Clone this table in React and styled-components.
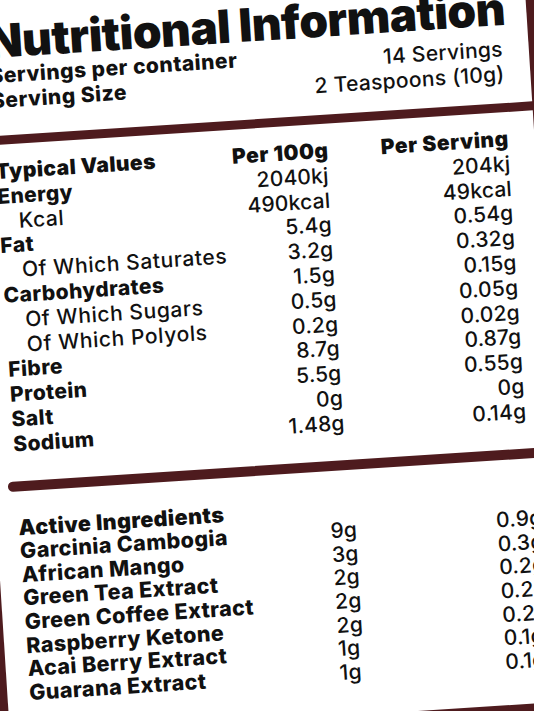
import React from 'react'
import styled, { createGlobalStyle } from 'styled-components'

const GlobalStyle = createGlobalStyle`
    html, body {
        margin: 0;
        padding: 0;
        background: #4e1b1e;
        overflow: hidden;
    }
    body {
        font-family: Inter, "Open Sans", "Liberation Sans", sans-serif;
        color: #111;
    }
`

const BROWN = '#4e1b1e'

const Stage = styled.div`
    width: 534px;
    height: 711px;
    overflow: hidden;
    display: flex;
    justify-content: center;
    align-items: flex-start;
    background: ${BROWN};
`

// the label is larger than the photo frame and tilted a little
const Label = styled.div`
    flex: none;
    width: 562px;
    margin-top: -30px;
    display: flex;
    flex-direction: column;
    gap: 9px;
    transform: rotate(-3.7deg);
    transform-origin: 281px 385px;
`

const Card = styled.section`
    background: #fff;
    padding: ${props => props.padding};
`

const Title = styled.h1`
    margin: 0;
    font-size: 46px;
    line-height: 44px;
    font-weight: 900;
    letter-spacing: -0.5px;
    white-space: nowrap;
`

const ServingGrid = styled.div`
    display: grid;
    grid-template-columns: 1fr auto;
    align-items: start;
`

const Stack = styled.div`
    display: flex;
    flex-direction: column;
    padding-top: ${props => props.offset || 0}px;
    text-align: ${props => props.align || 'left'};
`

const Line = styled.div`
    font-size: 21px;
    font-weight: ${props => props.bold ? 800 : 500};
    letter-spacing: ${props => props.bold ? 0.5 : 0.3}px;
    line-height: 25px;
    white-space: nowrap;
`

const Row = styled.div`
    display: grid;
    grid-template-columns: ${props => props.columns};
    align-items: baseline;
    height: ${props => props.height}px;
    line-height: ${props => props.height}px;
    white-space: nowrap;
`

const Name = styled.span`
    font-size: ${props => props.size || 21}px;
    font-weight: ${props => props.heavy ? 900 : props.sub ? 500 : 800};
    letter-spacing: ${props => props.sub ? 0.6 : 0.4}px;
    padding-left: ${props => props.sub ? 20 : 0}px;
`

const Value = styled.span`
    font-size: 21px;
    font-weight: ${props => props.heavy ? 900 : 500};
    letter-spacing: ${props => props.heavy ? 0.5 : 0.2}px;
    text-align: ${props => props.align || 'right'};
`

const Divider = styled.div`
    height: 10px;
    margin: 24px -26px 25px -8px;
    border-radius: 5px 0 0 5px;
    background: ${BROWN};
`

const nutrition = [
    ['Energy', '2040kj', '204kj'],
    ['Kcal', '490kcal', '49kcal', true],
    ['Fat', '5.4g', '0.54g'],
    ['Of Which Saturates', '3.2g', '0.32g', true],
    ['Carbohydrates', '1.5g', '0.15g'],
    ['Of Which Sugars', '0.5g', '0.05g', true],
    ['Of Which Polyols', '0.2g', '0.02g', true],
    ['Fibre', '8.7g', '0.87g'],
    ['Protein', '5.5g', '0.55g'],
    ['Salt', '0g', '0g'],
    ['Sodium', '1.48g', '0.14g'],
]

const ingredients = [
    ['Garcinia Cambogia', '9g', '0.9g'],
    ['African Mango', '3g', '0.3g'],
    ['Green Tea Extract', '2g', '0.2g'],
    ['Green Coffee Extract', '2g', '0.2g'],
    ['Raspberry Ketone', '2g', '0.2g'],
    ['Acai Berry Extract', '1g', '0.1g'],
    ['Guarana Extract', '1g', '0.1g'],
]

const TABLE_COLS = '1fr 95px 182px'
const INGR_COLS = '311px 166px 1fr'

export default function App() {
    return (
        <Stage>
            <GlobalStyle />
            <Label>
                <Card padding="32px 26px 17px 22px">
                    <Title>Nutritional Information</Title>
                    <ServingGrid>
                        <Stack>
                            <Line bold>Servings per container</Line>
                            <Line bold>Serving Size</Line>
                        </Stack>
                        <Stack offset={6} align="right">
                            <Line>14 Servings</Line>
                            <Line>2 Teaspoons (10g)</Line>
                        </Stack>
                    </ServingGrid>
                </Card>
                <Card padding="15px 26px 32px 22px">
                    <Row columns={TABLE_COLS} height={24.8}>
                        <Name heavy>Typical Values</Name>
                        <Value heavy>Per 100g</Value>
                        <Value heavy>Per Serving</Value>
                    </Row>
                    {nutrition.map(([name, per100, perServing, sub]) => (
                        <Row key={name} columns={TABLE_COLS} height={24.8}>
                            <Name sub={sub}>{name}</Name>
                            <Value>{per100}</Value>
                            <Value>{perServing}</Value>
                        </Row>
                    ))}
                    <Divider />
                    <Row columns={INGR_COLS} height={23.6}>
                        <Name heavy size={21.5}>Active Ingredients</Name>
                    </Row>
                    {ingredients.map(([name, per100, perServing]) => (
                        <Row key={name} columns={INGR_COLS} height={23.6}>
                            <Name size={21.5}>{name}</Name>
                            <Value align="left">{per100}</Value>
                            <Value align="left">{perServing}</Value>
                        </Row>
                    ))}
                </Card>
            </Label>
        </Stage>
    )
}
